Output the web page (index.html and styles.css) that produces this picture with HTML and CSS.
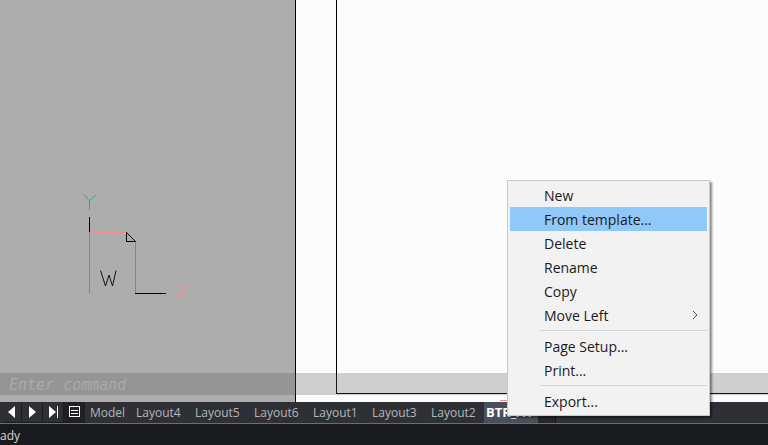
FILE: index.html
```html
<!DOCTYPE html>
<html lang="en">
<head>
    <meta charset="UTF-8">
    <meta name="viewport" content="width=device-width, initial-scale=1.0">
    <title>Layouts</title>
    <link rel="stylesheet" href="styles.css">
</head>
<body>
    <div class="canvas">
        <div class="outside">
            <svg class="ucs" width="130" height="120" viewBox="0 0 130 120">
                <g fill="none" shape-rendering="crispEdges">
                    <path d="M19.5 16V25" stroke="#1fb56e"/>
                    <path d="M19.5 32V47" stroke="#000"/>
                    <path d="M19.5 47V108" stroke="#2ab673"/>
                    <path d="M20 47.5H56" stroke="#f58b8b"/>
                    <path d="M65.5 56V108" stroke="#2ab673"/>
                    <path d="M19 108.5H65" stroke="#f58b8b"/>
                    <path d="M65 108.5H96" stroke="#000"/>
                    <path d="M56.5 47V56.5H65.5" stroke="#000"/>
                </g>
                <g fill="none">
                    <path d="M56.5 47.5L65.5 56.5" stroke="#000"/>
                    <path d="M14 9.5L19.5 16L26 9.5" stroke="#1fb56e"/>
                    <path d="M105.5 100.5L117 115.5M117 100.5L105.5 115.5" stroke="#f58b8b"/>
                    <path d="M30.5 85.5L35.5 101L39 90L42.5 101L46 85.5" stroke="#111"/>
                </g>
            </svg>
        </div>
        <div class="sheet">
            <div class="paper"></div>
        </div>
        <div class="command">Enter command</div>
        <div class="red-tick"></div>
    </div>
    <div class="tabbar">
        <div class="nav">
            <button class="nav-btn nav-cut"><svg width="12" height="12" viewBox="0 0 12 12"><path d="M9 0L2 6L9 12Z" fill="#fff"/></svg></button>
            <button class="nav-btn"><svg width="12" height="12" viewBox="0 0 12 12"><path d="M3 0L10 6L3 12Z" fill="#fff"/></svg></button>
            <button class="nav-btn"><svg width="12" height="12" viewBox="0 0 12 12"><path d="M2 0L9 6L2 12Z" fill="#fff"/><path d="M10.5 0V12" stroke="#fff"/></svg></button>
            <button class="nav-btn nav-list"><svg width="14" height="14" viewBox="0 0 14 14" fill="none" stroke="#fff"><rect x="1.5" y="1.5" width="10" height="10"/><path d="M3 5.5H10M3 8.5H10"/></svg></button>
        </div>
        <div class="tab tab-model">Model</div>
        <div class="tab">Layout4</div>
        <div class="tab">Layout5</div>
        <div class="tab">Layout6</div>
        <div class="tab">Layout1</div>
        <div class="tab">Layout3</div>
        <div class="tab tab-last">Layout2</div>
        <div class="tab active">BTR_A1</div>
        <div class="tab-rest"></div>
    </div>
    <div class="status">ady</div>

    <ul class="menu">
        <li>New</li>
        <li class="selected">From template...</li>
        <li>Delete</li>
        <li>Rename</li>
        <li>Copy</li>
        <li class="has-sub">Move Left
            <svg width="6" height="10" viewBox="0 0 6 10" fill="none" stroke="#555"><path d="M1 1L5 5L1 9"/></svg>
        </li>
        <li class="sep"></li>
        <li>Page Setup...</li>
        <li>Print...</li>
        <li class="sep"></li>
        <li>Export...</li>
    </ul>
</body>
</html>
```

FILE: styles.css
```css
* {
    margin: 0;
    padding: 0;
    box-sizing: border-box;
}

html, body {
    width: 768px;
    height: 445px;
    overflow: hidden;
}

body {
    font-family: 'Open Sans', 'Liberation Sans', sans-serif;
    background: #191a1e;
    position: relative;
    display: flex;
    flex-direction: column;
}

.canvas {
    height: 402px;
    position: relative;
    display: flex;
    background: #fcfcfc;
}

.outside {
    width: 296px;
    background: #adadad;
    border-right: 1px solid #000;
    position: relative;
    flex-shrink: 0;
}

.ucs {
    position: absolute;
    left: 70px;
    top: 185px;
}

.sheet {
    flex: 1;
    padding-left: 40px;
}

.paper {
    height: 394px;
    border: 1px solid #000;
    border-top: none;
    border-right: none;
}

.command {
    position: absolute;
    left: 0;
    right: 0;
    top: 373px;
    height: 22px;
    padding-left: 9px;
    background: rgba(81, 85, 81, 0.27);
    color: #a9aba9;
    font-family: 'DejaVu Sans Mono', monospace;
    font-style: italic;
    font-size: 15px;
    line-height: 24px;
}

.red-tick {
    position: absolute;
    left: 500px;
    top: 400px;
    width: 8px;
    height: 1px;
    background: #f58b8b;
}

.tabbar {
    height: 22px;
    background: #2e3036;
    border-bottom: 1px solid #6c6e72;
    display: flex;
    align-items: stretch;
}

.nav {
    display: flex;
    background: #1a1b1f;
    gap: 1px;
    margin-left: 2px;
    padding-bottom: 1px;
}

.nav-btn {
    width: 20px;
    background: #2e3036;
    border: none;
    display: flex;
    align-items: center;
    justify-content: center;
}

.nav-cut {
    width: 19px;
}

.nav-list {
    width: 21px;
    background: #1f2024;
}

.tab {
    width: 59px;
    padding-left: 7px;
    color: #b4b6ba;
    font-size: 12px;
    line-height: 21px;
}

.tab-model {
    width: 44px;
    padding-left: 5px;
}

.tab-last {
    width: 60px;
}

.tab.active {
    width: 54px;
    padding-left: 2px;
    background: #4a505a;
    color: #fff;
    font-size: 13px;
    font-weight: 700;
    white-space: nowrap;
    overflow: hidden;
}

.tab-rest {
    width: 18px;
    background: #26272c;
    border-right: 1px solid #111215;
}

.status {
    height: 21px;
    color: #d8d8d8;
    font-size: 12px;
    line-height: 23px;
}

.menu {
    position: absolute;
    left: 507px;
    top: 180px;
    width: 203px;
    height: 236px;
    list-style: none;
    background: #f2f2f2;
    border: 1px solid #c8c8c8;
    box-shadow: 2px 2px 2px rgba(0, 0, 0, 0.45);
    padding: 2px;
    font-size: 14px;
    color: #1a1a1a;
}

.menu li {
    height: 24px;
    line-height: 26px;
    padding-left: 34px;
    position: relative;
}

.menu li.selected {
    background: #90c8f8;
}

.menu li.sep {
    height: 7px;
    padding: 0;
    margin-left: 30px;
}

.menu li.sep::after {
    content: "";
    position: absolute;
    left: 0;
    right: 0;
    top: 3px;
    height: 1px;
    background: #d4d4d4;
}

.has-sub svg {
    position: absolute;
    right: 9px;
    top: 7px;
}
```
